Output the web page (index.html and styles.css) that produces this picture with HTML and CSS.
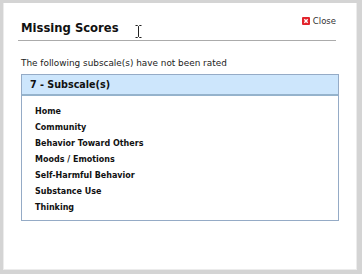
FILE: index.html
```html
<!DOCTYPE html>
<html lang="en">
<head>
    <meta charset="UTF-8">
    <title>Missing Scores</title>
    <link rel="stylesheet" href="styles.css">
</head>
<body>
    <div class="dialog">
        <div class="dialog-header">
            <h1>Missing Scores</h1>
            <a class="close-link" href="#">
                <span class="close-icon">
                    <svg width="8" height="8" viewBox="0 0 8 8">
                        <rect width="8" height="8" rx="1" fill="#e2232b"/>
                        <path d="M2.3 2.3 L5.7 5.7 M5.7 2.3 L2.3 5.7" stroke="#fff" stroke-width="1.4"/>
                    </svg>
                </span>
                Close
            </a>
            <span class="cursor">
                <svg width="7" height="13" viewBox="0 0 7 13">
                    <path d="M0.5 0.5 H2.5 L3.5 1.5 L4.5 0.5 H6.5 M3.5 1.5 V11.5 M0.5 12.5 H2.5 L3.5 11.5 L4.5 12.5 H6.5" stroke="#222" stroke-width="1" fill="none"/>
                </svg>
            </span>
        </div>

        <p class="intro">The following subscale(s) have not been rated</p>

        <div class="subscale-box">
            <div class="subscale-title">7 - Subscale(s)</div>
            <ul class="subscale-list">
                <li>Home</li>
                <li>Community</li>
                <li>Behavior Toward Others</li>
                <li>Moods / Emotions</li>
                <li>Self-Harmful Behavior</li>
                <li>Substance Use</li>
                <li>Thinking</li>
            </ul>
        </div>
    </div>
</body>
</html>
```

FILE: styles.css
```css
* {
    margin: 0;
    padding: 0;
    box-sizing: border-box;
}

html {
    background: #d4d4d4;
}

body {
    font-family: 'DejaVu Sans', Verdana, sans-serif;
    width: 362px;
    height: 274px;
    padding: 3px 5px 4px 3px;
}

.dialog {
    height: 267px;
    background: #fff;
    border-left: 1px solid #ececec;
    border-right: 1px solid #ececec;
    border-bottom: 1px solid #ececec;
    padding: 0 20px 0 14px;
}

.dialog-header {
    position: relative;
    display: flex;
    justify-content: space-between;
    align-items: flex-start;
    border-bottom: 1px solid #ababab;
    height: 38px;
    padding: 18px 0 0 3px;
}

.dialog-header h1 {
    font-size: 11.6px;
    font-weight: bold;
    color: #111;
}

.close-link {
    display: flex;
    align-items: center;
    gap: 3px;
    font-size: 8.5px;
    color: #333;
    text-decoration: none;
    margin-top: -5px;
}

.close-icon {
    display: flex;
}

.cursor {
    position: absolute;
    left: 117px;
    top: 22px;
    display: flex;
}

.intro {
    font-size: 8.9px;
    color: #222;
    margin: 17px 0 0 3px;
}

.subscale-box {
    margin: 6px 0 0 3px;
    width: 318px;
    height: 147px;
    border: 1px solid #95abc6;
}

.subscale-title {
    background: #cde6fc;
    border-bottom: 2px solid #95b3cc;
    height: 21px;
    padding: 4px 0 0 8px;
    font-size: 9.6px;
    font-weight: bold;
    color: #111;
}

.subscale-list {
    list-style: none;
    padding: 11px 0 0 13px;
}

.subscale-list li {
    font-size: 8px;
    font-weight: bold;
    color: #111;
    height: 16px;
}
```
